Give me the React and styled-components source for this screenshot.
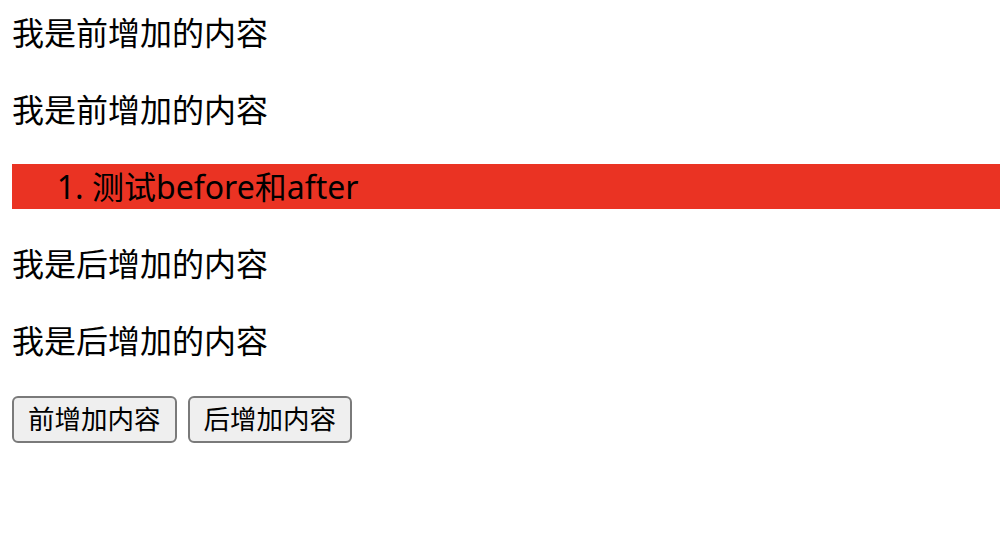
import React from 'react';
import styled, { createGlobalStyle } from 'styled-components';

const GlobalStyle = createGlobalStyle`
    body {
        margin: 0;
        background: #fff;
        font-family: 'Noto Sans', 'Noto Sans CJK SC', sans-serif;
        color: #000;
    }
`;

const Page = styled.div`
    display: flex;
    flex-direction: column;
    gap: 32px;
    padding: 10px 0 0 12px;
`;

const Line = styled.p`
    margin: 0;
    font-size: 32px;
    line-height: 45px;
`;

const List = styled.ol`
    margin: 0;
    padding-left: 80px;
    background: #ea3323;
    font-size: 32px;
    line-height: 45px;
`;

const ButtonRow = styled.div`
    display: flex;
    gap: 11px;
    padding-top: 1px;
`;

const Button = styled.button`
    height: 47px;
    padding: 0 14px;
    border: 2px solid #7a7a7a;
    border-radius: 6px;
    background: #efefef;
    color: #000;
    font-family: 'Noto Sans', 'Noto Sans CJK SC', sans-serif;
    font-size: 26.5px;
    line-height: 37px;
    cursor: pointer;
`;

const App = () => {
    const before = ['我是前增加的内容', '我是前增加的内容'];
    const after = ['我是后增加的内容', '我是后增加的内容'];
    return (
        <>
            <GlobalStyle />
            <Page>
                {before.map((t, i) => (
                    <Line key={'b' + i}>{t}</Line>
                ))}
                <List>
                    <li>测试before和after</li>
                </List>
                {after.map((t, i) => (
                    <Line key={'a' + i}>{t}</Line>
                ))}
                <ButtonRow>
                    <Button>前增加内容</Button>
                    <Button>后增加内容</Button>
                </ButtonRow>
            </Page>
        </>
    );
};

export default App;
